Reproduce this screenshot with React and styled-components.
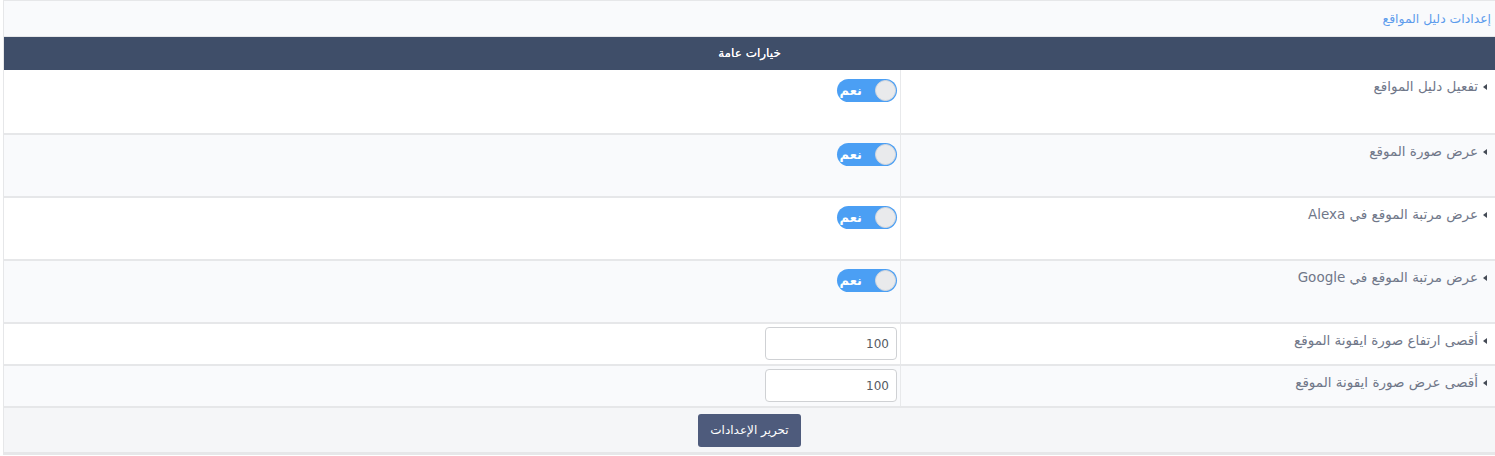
import React from "react";
import styled, { createGlobalStyle } from "styled-components";

const GlobalStyle = createGlobalStyle`
  html, body {
    margin: 0;
    padding: 0;
    background: #ffffff;
    overflow: hidden;
  }
  body {
    font-family: "DejaVu Sans", "Noto Sans", sans-serif;
  }
`;

const rows = [
  { label: "تفعيل دليل المواقع", type: "toggle" },
  { label: "عرض صورة الموقع", type: "toggle" },
  { label: "عرض مرتبة الموقع في Alexa", type: "toggle" },
  { label: "عرض مرتبة الموقع في Google", type: "toggle" },
  { label: "أقصى ارتفاع صورة ايقونة الموقع", type: "input", value: "100" },
  { label: "أقصى عرض صورة ايقونة الموقع", type: "input", value: "100" },
];

const App = () => {
  return (
    <>
      <GlobalStyle />
      <StyledPanel dir="rtl">
        <TitleBar>إعدادات دليل المواقع</TitleBar>
        <HeadBar>خيارات عامة</HeadBar>
        {rows.map((row, i) => (
          <Row key={i} $alt={i % 2 === 1} $tall={row.type === "toggle"} $first={i === 0}>
            <Label>
              <Caret />
              {row.label}
            </Label>
            <Value $first={i === 0}>
              {row.type === "toggle" ? (
                <Toggle>
                  <Knob />
                  <span>نعم</span>
                </Toggle>
              ) : (
                <NumInput defaultValue={row.value} dir="ltr" />
              )}
            </Value>
          </Row>
        ))}
        <Footer>
          <SubmitButton>تحرير الإعدادات</SubmitButton>
        </Footer>
      </StyledPanel>
    </>
  );
};

const StyledPanel = styled.div`
  margin-left: 3px;
  border: 1px solid #e6e7e9;
  border-right: none;
  border-bottom-width: 3px;
  background: #f5f6f8;
`;

const TitleBar = styled.div`
  height: 35px;
  line-height: 35px;
  padding: 0 4px;
  background: #f9fafc;
  color: #5d9cec;
  font-size: 12.4px;
  border-bottom: 1px solid #e6e7e9;
`;

const HeadBar = styled.div`
  height: 33px;
  line-height: 32px;
  text-align: center;
  background: #3f4e69;
  color: #ffffff;
  font-size: 12px;
  text-shadow: 0 0 0.4px #ffffff;
`;

const Row = styled.div`
  display: grid;
  grid-template-columns: 595px 1fr;
  height: ${(p) => (p.$first ? "63px" : p.$tall ? "61px" : "40px")};
  background: ${(p) => (p.$alt ? "#f9fafc" : "#ffffff")};
  border-bottom: 2px solid #e6e7e9;
`;

const Label = styled.div`
  display: flex;
  align-items: flex-start;
  gap: 5px;
  padding: 7px 8px 0 0;
  color: #707789;
  font-size: 13.5px;
  line-height: 18px;
  border-left: 1px solid #e8e9eb;
`;

const Caret = styled.span`
  display: inline-block;
  margin-top: 7px;
  width: 0;
  height: 0;
  border-top: 3px solid transparent;
  border-bottom: 3px solid transparent;
  border-right: 4px solid #444a55;
`;

const Value = styled.div`
  display: flex;
  align-items: flex-start;
  padding: ${(p) => (p.$first ? "9px" : "8px")} 3px 0 0;
`;

const Toggle = styled.div`
  display: flex;
  align-items: center;
  gap: 13px;
  width: 60px;
  height: 23px;
  box-sizing: border-box;
  padding: 0 1px;
  border-radius: 12px;
  background: #4b9ff4;
  color: #ffffff;
  font-size: 13px;
  font-weight: bold;
`;

const Knob = styled.span`
  width: 19px;
  height: 19px;
  border-radius: 50%;
  background: #e9eaec;
  border: 1px solid #d6d8dc;
`;

const NumInput = styled.input`
  margin-top: -5px;
  width: 132px;
  height: 33px;
  box-sizing: border-box;
  border: 1px solid #cfd1d4;
  border-radius: 4px;
  padding: 0 7px;
  text-align: right;
  font-family: "DejaVu Sans", sans-serif;
  font-size: 12px;
  color: #555a63;
  background: #ffffff;
  outline: none;
`;

const Footer = styled.div`
  display: flex;
  justify-content: center;
  align-items: center;
  height: 44px;
  background: #f5f6f8;
`;

const SubmitButton = styled.button`
  width: 103px;
  height: 33px;
  border: none;
  border-radius: 3px;
  background: #4e5b7c;
  color: #ffffff;
  font-family: "DejaVu Sans", sans-serif;
  font-size: 12px;
  cursor: pointer;
`;

export default App;
